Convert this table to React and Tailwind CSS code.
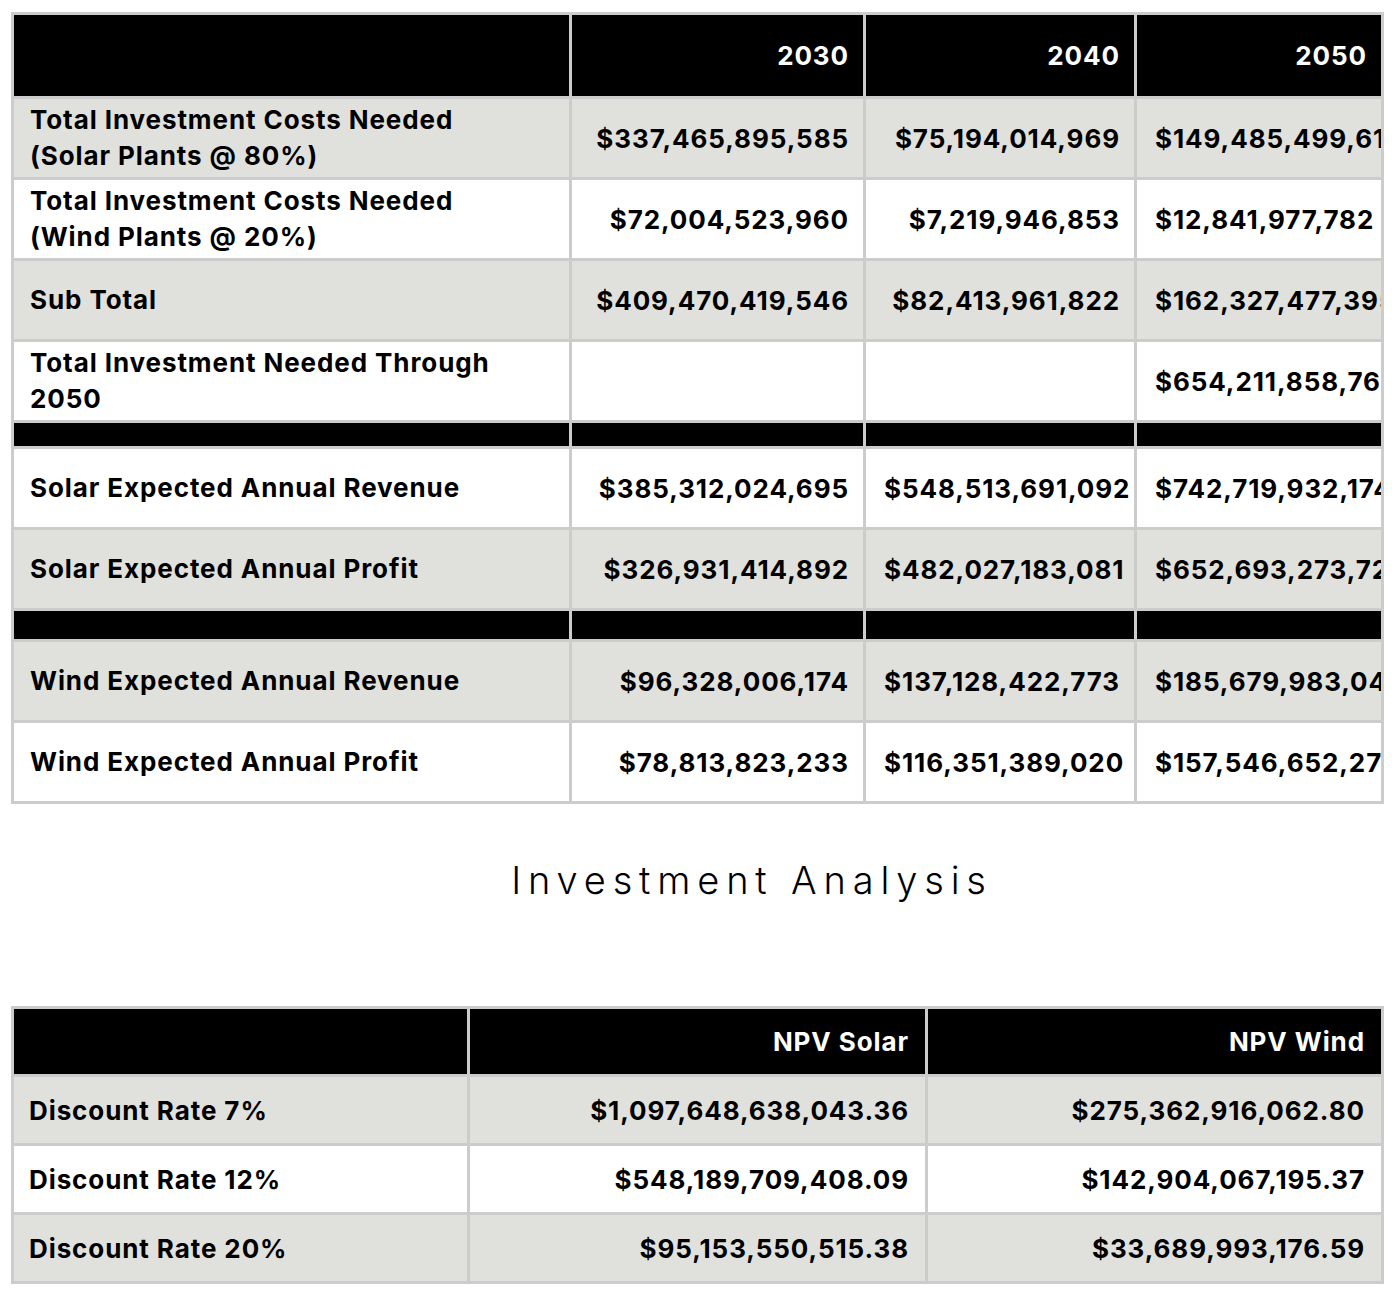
import React from "react";

const font = { fontFamily: "Inter, 'Noto Sans', sans-serif" };

const projection = [
  { label: ["Total Investment Costs Needed", "(Solar Plants @ 80%)"], values: ["$337,465,895,585", "$75,194,014,969", "$149,485,499,613"], bg: "gray" },
  { label: ["Total Investment Costs Needed", "(Wind Plants @ 20%)"], values: ["$72,004,523,960", "$7,219,946,853", "$12,841,977,782"], bg: "white" },
  { label: ["Sub Total"], values: ["$409,470,419,546", "$82,413,961,822", "$162,327,477,395"], bg: "gray" },
  { label: ["Total Investment Needed Through", "2050"], values: ["", "", "$654,211,858,763"], bg: "white" },
  { spacer: true, h: "h-[26px]" },
  { label: ["Solar Expected Annual Revenue"], values: ["$385,312,024,695", "$548,513,691,092", "$742,719,932,174"], bg: "white" },
  { label: ["Solar Expected Annual Profit"], values: ["$326,931,414,892", "$482,027,183,081", "$652,693,273,721"], bg: "gray" },
  { spacer: true, h: "h-[31px]" },
  { label: ["Wind Expected Annual Revenue"], values: ["$96,328,006,174", "$137,128,422,773", "$185,679,983,043"], bg: "gray" },
  { label: ["Wind Expected Annual Profit"], values: ["$78,813,823,233", "$116,351,389,020", "$157,546,652,273"], bg: "white" },
];

const npv = [
  { label: "Discount Rate 7%", solar: "$1,097,648,638,043.36", wind: "$275,362,916,062.80", bg: "gray" },
  { label: "Discount Rate 12%", solar: "$548,189,709,408.09", wind: "$142,904,067,195.37", bg: "white" },
  { label: "Discount Rate 20%", solar: "$95,153,550,515.38", wind: "$33,689,993,176.59", bg: "gray" },
];

const cell = "border-[3px] border-[#cccccc]";
const txt = "text-[26px] font-bold tracking-[0.035em]";

export default function App() {
  return (
    <div className="w-[1392px] bg-white text-black" style={font}>
      <div className="pt-[12px] pl-[11px] pr-[11px]">
        <table className="table-fixed border-collapse w-[1370px]">
          <colgroup>
            <col className="w-[558px]" />
            <col className="w-[294px]" />
            <col className="w-[271px]" />
            <col className="w-[247px]" />
          </colgroup>
          <thead>
            <tr className="bg-black text-white h-[84px]">
              <th className={cell}></th>
              {["2030", "2040", "2050"].map((y) => (
                <th key={y} className={`${cell} ${txt} text-right pr-[14px]`}>
                  {y}
                </th>
              ))}
            </tr>
          </thead>
          <tbody>
            {projection.map((r, i) =>
              r.spacer ? (
                <tr key={i} className={`bg-black ${r.h}`}>
                  <td className={cell}></td>
                  <td className={cell}></td>
                  <td className={cell}></td>
                  <td className={cell}></td>
                </tr>
              ) : (
                <tr key={i} className={`h-[81px] ${r.bg === "gray" ? "bg-[#e0e1dc]" : "bg-white"}`}>
                  <td className={`${cell} ${txt} pl-[16px] pr-2 leading-[36px]`}>
                    {r.label.map((l) => (
                      <div key={l}>{l}</div>
                    ))}
                  </td>
                  {r.values.map((v, j) => (
                    <td
                      key={j}
                      className={`${cell} ${txt} overflow-hidden whitespace-nowrap text-right pl-[18px] pr-[14px]`}
                    >
                      {v}
                    </td>
                  ))}
                </tr>
              )
            )}
          </tbody>
        </table>
      </div>

      <div className="h-[202px] flex items-center justify-center pl-[112px] pb-[50px]">
        <h2 className="text-[38px] font-light tracking-[0.18em]">Investment Analysis</h2>
      </div>

      <div className="pl-[11px] pr-[11px] pb-[22px]">
        <table className="table-fixed border-collapse w-[1370px]">
          <colgroup>
            <col className="w-[456px]" />
            <col className="w-[458px]" />
            <col className="w-[456px]" />
          </colgroup>
          <thead>
            <tr className="bg-black text-white h-[68px]">
              <th className={cell}></th>
              <th className={`${cell} ${txt} text-right pr-[16px]`}>NPV Solar</th>
              <th className={`${cell} ${txt} text-right pr-[16px]`}>NPV Wind</th>
            </tr>
          </thead>
          <tbody>
            {npv.map((r) => (
              <tr key={r.label} className={`h-[69px] ${r.bg === "gray" ? "bg-[#e0e1dc]" : "bg-white"}`}>
                <td className={`${cell} ${txt} pl-[15px]`}>{r.label}</td>
                <td className={`${cell} ${txt} text-right pr-[16px]`}>{r.solar}</td>
                <td className={`${cell} ${txt} text-right pr-[16px]`}>{r.wind}</td>
              </tr>
            ))}
          </tbody>
        </table>
      </div>
    </div>
  );
}
